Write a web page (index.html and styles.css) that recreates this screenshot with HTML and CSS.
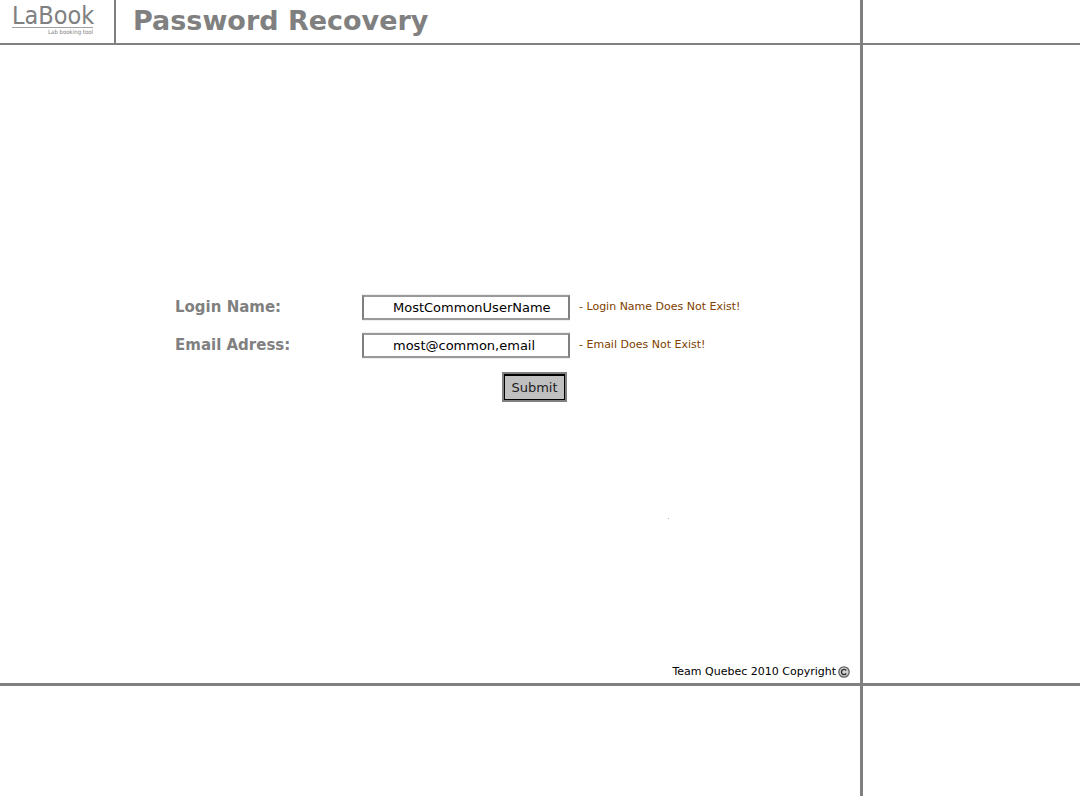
FILE: index.html
```html
<!DOCTYPE html>
<html lang="en">
<head>
<meta charset="utf-8">
<title>LaBook - Password Recovery</title>
<link rel="stylesheet" href="styles.css">
</head>
<body>
<div class="page">
  <header class="header">
    <a class="logo" href="#">
      <span class="logo-name">LaBook</span>
      <span class="logo-tagline">Lab booking tool</span>
    </a>
    <h1 class="title">Password Recovery</h1>
  </header>
  <div class="side header-side"></div>
  <main class="main">
    <form class="form">
      <label class="label" for="login">Login Name:</label>
      <input class="field" id="login" type="text" value="MostCommonUserName">
      <p class="error">- Login Name Does Not Exist!</p>
      <label class="label" for="email">Email Adress:</label>
      <input class="field" id="email" type="text" value="most@common,email">
      <p class="error">- Email Does Not Exist!</p>
      <button class="submit" type="submit">Submit</button>
    </form>
    <div class="speck"></div>
    <footer class="footer">
      <span>Team Quebec 2010 Copyright</span>
      <svg class="copyright" viewBox="0 0 12 12" role="img" aria-label="Copyright">
        <circle cx="6" cy="6" r="5.2" fill="#d0d0d0" stroke="#606060" stroke-width="1.3"/>
        <path d="M8.2 4.5A2.6 2.6 0 1 0 8.2 7.5" fill="none" stroke="#303030" stroke-width="1.4"/>
      </svg>
    </footer>
  </main>
  <div class="side"></div>
  <div class="bottom"></div>
  <div class="side bottom-side"></div>
</div>
</body>
</html>
```
FILE: styles.css
```css
* {
  box-sizing: border-box;
}

body {
  margin: 0;
  background: #fff;
  color: #000;
  font-family: "DejaVu Sans", Verdana, sans-serif;
}

.page {
  display: grid;
  grid-template-columns: minmax(0, 1fr) 220px;
  grid-template-rows: auto 1fr 113px;
  min-height: 100vh;
}

.header {
  display: flex;
  height: 45px;
  border-bottom: 2px solid #808080;
}

.side {
  border-left: 3px solid #808080;
}

.header-side {
  border-bottom: 2px solid #808080;
}

.bottom,
.bottom-side {
  border-top: 3px solid #808080;
}

.logo {
  display: flex;
  flex-direction: column;
  width: 116px;
  padding: 4px 21px 0 12px;
  border-right: 2px solid #808080;
  color: #808080;
  font-family: "DejaVu Sans Condensed", "DejaVu Sans", sans-serif;
  font-stretch: condensed;
  text-decoration: none;
}

.logo-name {
  border-bottom: 1px solid #a0a0a0;
  font-size: 25px;
  line-height: 23px;
}

.logo-tagline {
  font-size: 6px;
  line-height: 8px;
  text-align: right;
}

.title {
  margin: 0;
  padding-left: 17px;
  color: #808080;
  font-size: 27px;
  line-height: 41px;
}

.main {
  display: flex;
  flex-direction: column;
  padding: 250px 10px 4px 175px;
}

.form {
  display: grid;
  grid-template-columns: 187px 208px 1fr;
  row-gap: 13px;
  align-items: center;
}

.label {
  color: #808080;
  font-size: 15px;
  font-weight: bold;
  line-height: 25px;
}

.field {
  width: 100%;
  height: 25px;
  padding: 0 8px 0 29px;
  border: 2px solid #808080;
  border-top-color: #999;
  border-bottom-color: #999;
  background: #fff;
  box-shadow: 0 -1px #eee, 0 1px #eee;
  color: #000;
  font-family: inherit;
  font-size: 13px;
}

.error {
  margin: 0;
  padding: 0 0 2px 9px;
  color: #804000;
  font-size: 11px;
  line-height: 22px;
}

.submit {
  grid-column: 2;
  justify-self: end;
  width: 65px;
  height: 30px;
  margin: 1px 3px 0 0;
  padding: 0;
  border: 2px solid #808080;
  background: #c0c0c0;
  box-shadow: inset 0 0 0 1px #000, inset 0 2px #000;
  color: #202020;
  font-family: inherit;
  font-size: 13px;
}

.speck {
  width: 1px;
  height: 1px;
  margin: 116px 0 0 73%;
  background: #b0b0b0;
}

.footer {
  display: flex;
  justify-content: flex-end;
  align-items: center;
  gap: 2px;
  margin-top: auto;
  font-size: 11px;
  line-height: 14px;
}

.copyright {
  width: 12px;
  height: 12px;
}
```
